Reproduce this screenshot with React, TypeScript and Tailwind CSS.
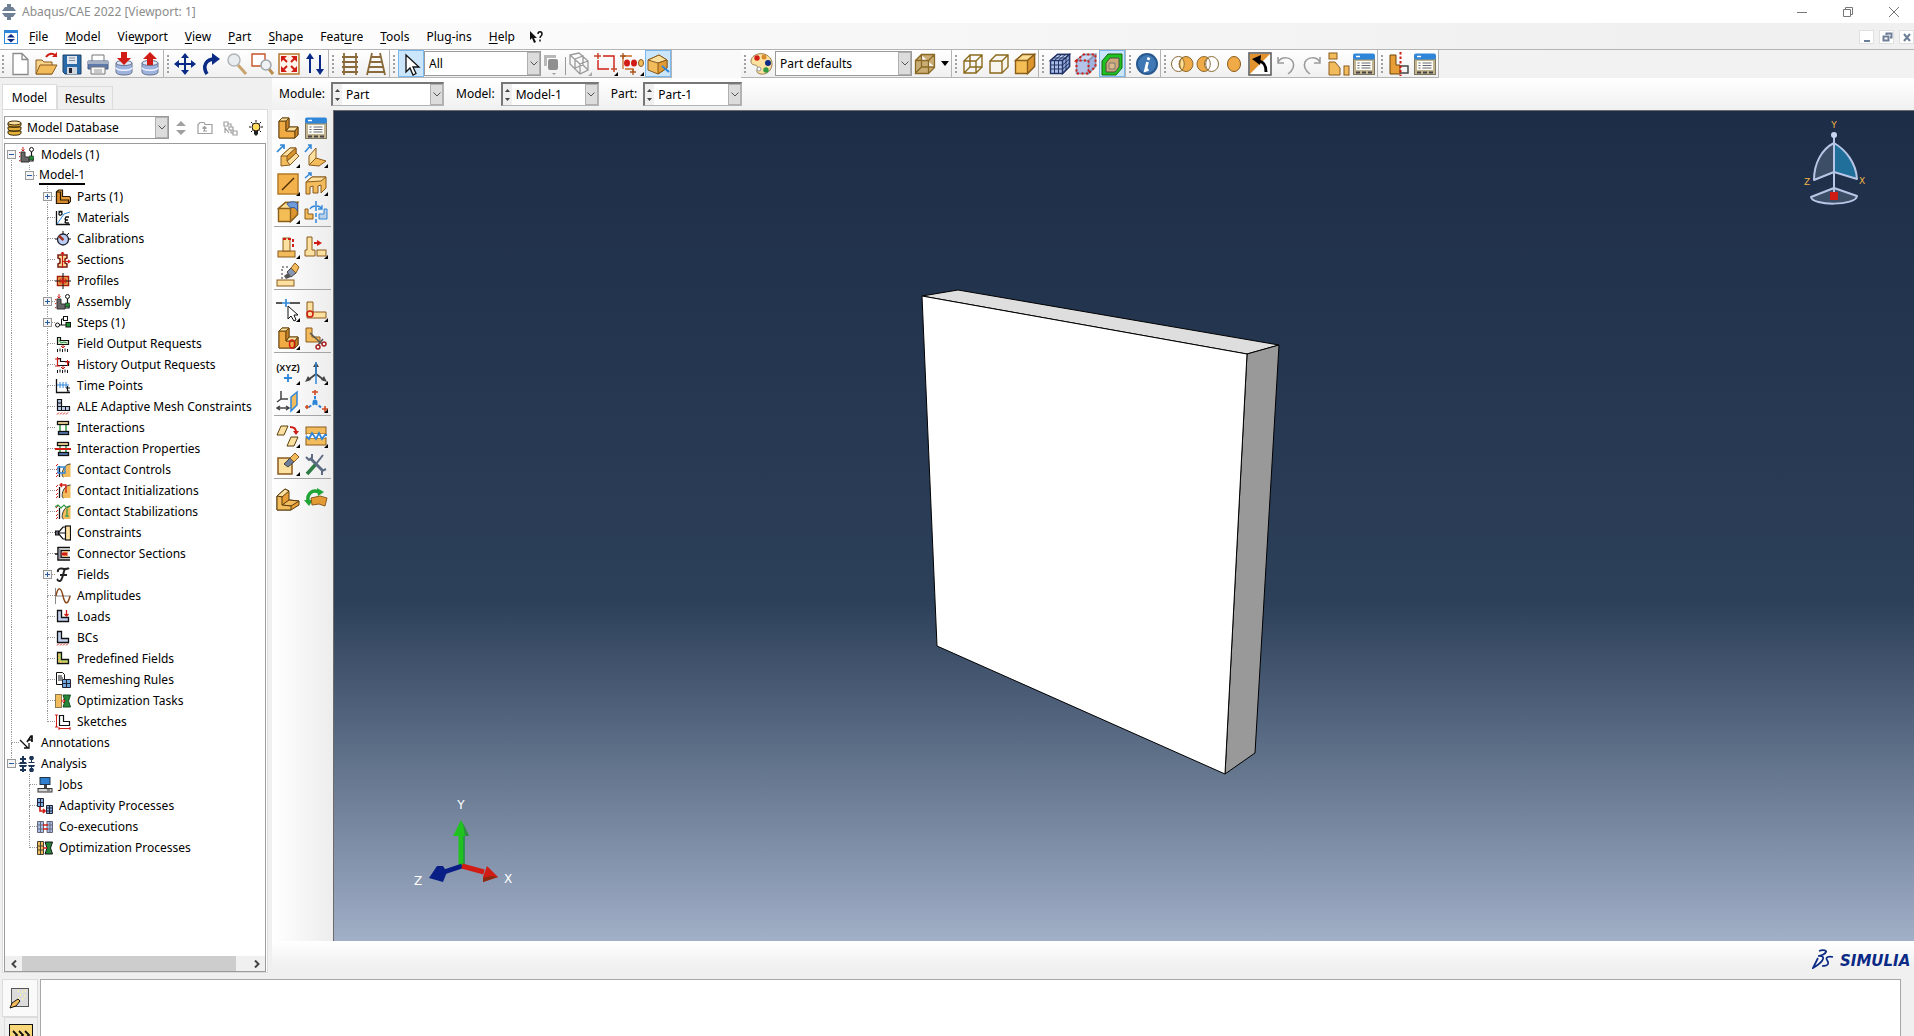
import type { ReactNode } from "react";

const G = "#f2bc5c";
const L = "#fbe0a0";
const D = "#8a5a1c";
const N = "#0b2a86";
const R = "#d01c14";
const B = "#2f86d8";

const cube = (front: string, top: string, side: string, stroke: string) => (
  <g fill={front} stroke={stroke} strokeWidth="1.4">
    <path d="M2.5 8.500l7-6h12v12l-7 7h-12z" />
    <path d="M2.500 8.500l7-6h12l-7 6z" fill={top} />
    <path d="M14.500 8.500l7-6v12l-7 7z" fill={side} />
  </g>
);

const dialog = (
  <g>
    <rect x="1.500" y="7" width="21" height="15.500" fill="#c3b490" stroke="#7c7460" />
    <rect x="1" y="1.500" width="22" height="6" rx="2" fill={B} />
    <path d="M4 4.500h4" stroke="#fff" strokeWidth="1.500" />
    <rect x="4" y="9" width="16" height="9" fill="#fdfdf6" />
    <path d="M5.500 11h2m2 0h9M5.500 13.500h2m2 0h9M5.500 16h2m2 0h9" stroke="#667" />
    <path d="M4 20.500h4m2 0h4m2 0h4" stroke="#444" strokeWidth="2" />
  </g>
);

const partL = (
  <g stroke="#6b4710" strokeWidth="1">
    <path d="M3 5l3-3h7v9h9v8l-3 3H3z" fill={G} />
    <path d="M3 5h7v10h9v7H3z" fill="#f0ab45" />
    <path d="M3 5l3-3h7l-3 3zM10 15l3-4h9l-3 4z" fill={L} />
    <path d="M10 5l3-3v9l-3 4zM19 15l3-4v8l-3 3z" fill="#c9832a" />
  </g>
);

const flyout = <path d="M24 20v4h-4z" fill="#000" stroke="none" />;

const database = (arrow: ReactNode) => (
  <g>
    <path d="M4 11v9c0 4 16 4 16 0v-9" fill="#9db2dd" stroke="#69748f" />
    <ellipse cx="12" cy="11" rx="8" ry="2.500" fill="#dfe8fa" stroke="#69748f" />
    <path d="M4 15.500c0 3.500 16 3.500 16 0" fill="none" stroke="#eef3ff" strokeWidth="1.500" />
    {arrow}
  </g>
);

const ICONS: Record<string, ReactNode> = {
  new: <path d="M5 1.500h9l6 6v15H5zM14 1.500v6h6" fill="#fff" stroke="#8b8b8b" strokeWidth="1.300" />,
  open: (
    <g>
      <path d="M2 22V8h6l2 2h8v12z" fill="#f7d48a" stroke={D} />
      <path d="M2 22l4-9h17l-5 9z" fill={G} stroke={D} />
      <path d="M12 5c3-4 6-4 9-2" fill="none" stroke={R} strokeWidth="2" />
      <path d="M18 5h5V0z" fill={R} />
    </g>
  ),
  save: (
    <g>
      <path d="M3 3h18v19H5l-2-2z" fill="#2a6aa8" stroke="#1c4468" />
      <rect x="7" y="4" width="10" height="8" fill="#dfe8ef" />
      <path d="M9 6h6M9 8.500h6" stroke="#889" />
      <rect x="7" y="15" width="10" height="7" fill="#cfd6dc" />
      <rect x="9" y="16" width="3" height="5" fill="#223" />
    </g>
  ),
  print: (
    <g>
      <path d="M6 9V3h12v6" fill="#fff" stroke="#777" />
      <path d="M2 9h20v8H2z" fill="#5b79ab" stroke="#4b5d80" />
      <path d="M2 9h20v3H2z" fill="#a5b0c4" />
      <path d="M5 15h14v7H5z" fill="#f7f7f7" stroke="#777" />
      <path d="M8 18h8M8 20h8" stroke="#999" />
    </g>
  ),
  dbIn: database(<path d="M9 0h6v6h4l-7 7-7-7h4z" fill={R} />),
  dbOut: database(<path d="M9 13h6V7h4l-7-7-7 7h4z" fill={R} />),
  pan: (
    <g stroke={N} strokeWidth="2" fill={N}>
      <path d="M12 3v18M3 12h18" />
      <path d="M12 1l4 5H8zM12 23l4-5H8zM1 12l5-4v8zM23 12l-5-4v8z" strokeWidth="0" />
    </g>
  ),
  rotate: (
    <g>
      <path d="M8 22C3 14 7 7 16 7" fill="none" stroke={N} strokeWidth="3.500" />
      <path d="M13 1l8 6-8 6z" fill={N} />
    </g>
  ),
  zoom: (
    <g>
      <path d="M13 13l8 9" stroke="#c9a36c" strokeWidth="3" />
      <circle cx="9" cy="8" r="6" fill="#e9edf0" stroke="#b0b6ba" strokeWidth="1.500" />
    </g>
  ),
  zoomBox: (
    <g>
      <path d="M1 2h13v12H1z" fill="#fff" stroke="#c5552a" strokeWidth="1.400" />
      <path d="M18 17l4 5" stroke="#b98d4c" strokeWidth="3" />
      <circle cx="15" cy="13" r="5" fill="#eef2f5" stroke="#a0a6aa" strokeWidth="1.500" />
    </g>
  ),
  fit: (
    <g>
      <rect x="2" y="2" width="20" height="20" fill="#fff3ea" stroke="#b57a35" strokeWidth="1.500" />
      <path d="M4 4h6L4 10zM20 4v6l-6-6zM4 20v-6l6 6zM20 20h-6l6-6z" fill={R} />
      <path d="M6 6l4 4M18 6l-4 4M6 18l4-4M18 18l-4-4" stroke={R} strokeWidth="2" />
    </g>
  ),
  cycle: (
    <g fill={N} stroke={N} strokeWidth="2">
      <path d="M7 21V5M17 3v16" />
      <path d="M7 1l4 6H3zM17 23l4-6h-8z" strokeWidth="0" />
    </g>
  ),
  ladder: (
    <path d="M6 1v22M18 1v22M4 5h16M4 10h16M4 15h16M4 20h16" stroke="#8a6a3a" strokeWidth="1.800" fill="none" />
  ),
  perspective: (
    <path d="M8 1L3 23M16 1l5 22M7 5h10M6 10h12M5 15h14M3 20h18" stroke="#8a6a3a" strokeWidth="1.800" fill="none" />
  ),
  pointer: <path d="M7 3v17l4-4 3 7 3-1.500-3-6.500h6z" fill="#fff" stroke="#111" strokeWidth="1.300" />,
  overlap: (
    <g>
      <rect x="2" y="3" width="12" height="11" fill="#b9b9b9" />
      <path d="M5 6h9v8H5z" fill="#fff" />
      <rect x="6" y="7" width="10" height="11" rx="2" fill="#8f8f8f" />
      <path d="M10 21h4l-2 2z" fill="#999" />
      <path d="M23.500 5v18" stroke="#999" />
    </g>
  ),
  wireGray: (
    <g fill="none" stroke="#9a9a9a" strokeWidth="1.300">
      <path d="M2 3l9-2 9 8v9l-8 4-10-10zM2 3l10 9v10M12 12l8-3M7 7l8-3v9M7 7v9M7 16l8-3 5 5" />
      <path d="M24 20v4h-4z" fill="#aaa" stroke="none" />
    </g>
  ),
  dragBox: (
    <g>
      <path d="M9 4h11v11M4 8v9h11" fill="none" stroke={R} strokeWidth="1.400" />
      <path d="M0 4h7M4 1v6M17 17h6M20 14v6" stroke="#c5452a" strokeWidth="1.500" />
      {flyout}
    </g>
  ),
  dragDots: (
    <g>
      <path d="M3 4h9M3 4v13M5 17h8v3" fill="none" stroke="#c96a28" strokeWidth="1.300" />
      <path d="M0 4h6M3 1v6M10 20h6M13 17v6" stroke="#a8541c" strokeWidth="1.300" />
      <ellipse cx="7" cy="11" rx="3" ry="3.500" fill={R} />
      <ellipse cx="14" cy="11" rx="3" ry="3.500" fill={R} />
      <ellipse cx="21" cy="11" rx="2.500" ry="3.500" fill={G} stroke={D} />
      {flyout}
    </g>
  ),
  boxFace: (
    <g>
      <path d="M2 8l11-5 8 5v8l-9 6-10-4z" fill={G} stroke={D} />
      <path d="M2 8l11-5 8 5-9 3z" fill={L} stroke={D} />
      <path d="M12 11v11l9-6V8z" fill="#e29a35" stroke={D} />
      <path d="M16 14l7 6" stroke={B} strokeWidth="2" />
    </g>
  ),
  palette: (
    <g>
      <path d="M8 2c8-2 15 4 14 11-1 8-9 11-14 8-3-2 1-5-1-7s-6 0-6-5c0-3 3-6 7-7z" fill={L} stroke="#9a8050" />
      <circle cx="7" cy="6" r="2.700" fill={R} />
      <circle cx="14" cy="5" r="2.500" fill="#d98b2b" />
      <circle cx="18" cy="11" r="3" fill={N} />
      <circle cx="16" cy="18" r="2.700" fill="#2f9a42" />
      <circle cx="9" cy="17" r="2" fill="#fff" stroke="#999" />
    </g>
  ),
  cubeTan: (
    <path d="M2.500 8.500h13v13h-13zM2.500 8.500l6-6h13v13l-6 6M15.500 8.500l6-6M8.500 3v12h13M8.500 15l-6 6" fill="#c9ad74" stroke="#8a6a25" strokeWidth="1.300" />
  ),
  cubeWire: (
    <path d="M3 9h12v12H3zM9 3h12v12H9zM3 9l6-6M15 9l6-6M15 21l6-6M3 21l6-6" fill="none" stroke="#8a6a1c" strokeWidth="1.400" />
  ),
  cubeHidden: <path d="M3 9h12v12H3zM3 9l6-6h12v12l-6 6M15 9l6-6" fill="#f8f5ee" stroke="#8a6a1c" strokeWidth="1.400" />,
  cubeShaded: cube("#f5bd55", "#fbdc93", "#dd9530", "#8a5f1c"),
  cubeMesh: (
    <g>
      {cube("#a9bce8", "#c3d1f2", "#93a8da", "#223465")}
      <path d="M6.500 8.500v13M10.500 8.500v13M2.500 13h12l7-6M2.500 17h12l7-6M6.500 8.500l7-6M10.500 8.500l7-6M18 5.500v13M5.500 6h12" fill="none" stroke="#223465" />
    </g>
  ),
  cubeSeeds: (
    <g>
      {cube("#b3c4e8", "#c9d6f2", "#9fb3de", "#8a8fa8")}
      <path d="M2.500 8.500v13h12v-13h-12l7-6h12v12l-7 7" fill="none" stroke={R} strokeWidth="2" strokeDasharray="2 2.500" />
    </g>
  ),
  cubeGreen: (
    <g>
      <path d="M2 9l6-7h14v14l-6 7H2z" fill="#1fc21f" stroke="#116611" />
      <path d="M6 11l4-5h9v9l-4 5H6z" fill="#cfa878" stroke="#4a4a4a" />
      <path d="M9 11h6v6H9z" fill="#dcb98a" stroke="#777" />
    </g>
  ),
  info: (
    <g>
      <circle cx="12" cy="12" r="10" fill="#3f78b5" stroke="#27598f" strokeWidth="2" />
      <path d="M14 5.500l-1 2.500M12.500 10l-2 8.500 3-1" stroke="#fff" strokeWidth="2.800" fill="none" />
    </g>
  ),
  setOr: (
    <g stroke="#8a6a30">
      <ellipse cx="8.500" cy="12" rx="7" ry="7.500" fill="#fff" />
      <ellipse cx="16" cy="12" rx="7" ry="7.500" fill="#f0ab48" />
      <path d="M12 6c3 3 3 9 0 12-3-3-3-9 0-12z" fill="#fbdc93" />
    </g>
  ),
  setMinus: (
    <g stroke="#8a6a30">
      <ellipse cx="8" cy="12" rx="7" ry="7.500" fill="#f0ab48" />
      <ellipse cx="15.500" cy="12" rx="7" ry="7.500" fill="#fff" />
      <path d="M12 6c3 3 3 9 0 12-3-3-3-9 0-12z" fill="#fff" />
    </g>
  ),
  setOne: <ellipse cx="12" cy="12" rx="6.500" ry="7.500" fill="#f0ab48" stroke={D} />,
  invert: (
    <g>
      <rect x="1" y="1" width="22" height="22" fill="#fff" stroke="#555" strokeWidth="1.500" />
      <path d="M2 2h20L2 22z" fill="#e2932e" />
      <path d="M18 20c0-7-2-10-7-11" fill="none" stroke="#000" strokeWidth="3" />
      <path d="M4 7l9-4-1 10z" fill="#000" />
    </g>
  ),
  undo: <path d="M4 5v6h6M4 10c4-6 12-5 15 0 2 5-1 9-5 12" fill="none" stroke="#9a9a9a" strokeWidth="1.500" />,
  redo: <path d="M20 5v6h-6M20 10c-4-6-12-5-15 0-2 5 1 9 5 12" fill="none" stroke="#9a9a9a" strokeWidth="1.500" />,
  pieces: (
    <g fill={G} stroke={D}>
      <rect x="3" y="1" width="8" height="6" />
      <path d="M3 10h6l5 6v7H3z" />
      <rect x="18" y="14" width="5" height="9" />
    </g>
  ),
  dialog,
  section: (
    <g>
      <path d="M3 3h6v10h4v9H3z" fill="#e89e36" stroke="#6b4710" />
      <path d="M13 14h8v7h-8" fill="none" stroke="#444" strokeWidth="1.500" />
      <path d="M13.500 0v24" stroke={R} strokeWidth="2" strokeDasharray="2.500 2" />
    </g>
  ),
  part: partL,
  extrude: (
    <g>
      <path d="M5 12l9-8h6v5l3 3-9 9-9 1z" fill={G} stroke={D} />
      <path d="M5 12l9-8h6l-9 8z" fill={L} stroke={D} />
      <path d="M11 17l9-8 3 3-9 9z" fill={L} stroke={D} />
      <path d="M11 12l9-8v5l-9 8z" fill="#d9952f" stroke={D} />
      <path d="M1 8l7-7M4 1h4v4" stroke={B} fill="none" strokeWidth="1.700" />
      {flyout}
    </g>
  ),
  shell: (
    <g>
      <path d="M5 12l7-8v10l-7 7z" fill={L} stroke={D} />
      <path d="M5 21l7-7 10 3-7 5z" fill={G} stroke={D} />
      <path d="M1 8l6-7M4 1h3v4" stroke={B} fill="none" strokeWidth="1.500" />
      {flyout}
    </g>
  ),
  wire: (
    <g>
      <rect x="2" y="2" width="20" height="20" fill="#f3b24c" stroke="#b57e2a" strokeWidth="1.500" />
      <path d="M6 18L18 6" stroke="#4a3008" strokeWidth="1.500" />
      {flyout}
    </g>
  ),
  cut: (
    <g>
      <path d="M2 10l6-5h14v11l-5 5v-8l-3 1v7H9v-7l-3 1v7H2z" fill={G} stroke={D} />
      <path d="M2 10l6-5h14l-5 4z" fill={L} stroke={D} />
      <path d="M1 6l6-5M4 1h3v3" stroke={B} fill="none" strokeWidth="1.500" />
      {flyout}
    </g>
  ),
  round: (
    <g>
      {cube("#f5bd55", "#fbdc93", "#dd9530", "#8a5f1c")}
      <path d="M11 4c3-3 9-3 10.500 0v7c-2-4-5-4-7-3z" fill="#6f9bd8" stroke="#3a5c98" />
      {flyout}
    </g>
  ),
  mirror: (
    <g>
      <path d="M1 9h3v5h5v5H1z" fill={G} stroke={D} />
      <path d="M23 9h-3v5h-5v5h8z" fill="#b9cfe8" stroke={B} />
      <path d="M12 1v22" stroke={B} strokeWidth="1.500" strokeDasharray="4 2" />
      <path d="M6 9c2-4 10-4 12 0M18 5v4h-4" fill="none" stroke={B} strokeWidth="1.300" />
    </g>
  ),
  editFeature: (
    <g>
      <rect x="2" y="16" width="17" height="6" fill={G} stroke={D} />
      <rect x="7" y="3" width="7" height="13" fill={L} stroke={D} />
      <path d="M7 4h10v10" stroke={R} strokeWidth="2" strokeDasharray="3 2" fill="none" />
      {flyout}
    </g>
  ),
  moveFeature: (
    <g>
      <path d="M3 2h5v13h3v6H1v-6h2z" fill={L} stroke={D} />
      <rect x="13" y="15" width="9" height="6" fill={L} stroke={D} />
      <path d="M10 8h5" stroke={R} strokeWidth="2" />
      <path d="M13 5l5 3-5 3z" fill={R} />
      {flyout}
    </g>
  ),
  eraseFeature: (
    <g>
      <rect x="1" y="17" width="17" height="6" fill={L} stroke={D} />
      <path d="M6 16V4h6" fill="none" stroke="#333" strokeDasharray="2 2" />
      <path d="M11 9l4-4 5 5-5 4z" fill="#8796b0" stroke="#444" />
      <path d="M15 5l4-5 4 4-3 6z" fill={G} stroke={D} />
      <path d="M8 13l4-3 3 4-5 2z" fill="#555" />
    </g>
  ),
  datumPick: (
    <g>
      <path d="M0 5h6M14 5h10" stroke="#222" strokeWidth="1.500" />
      <path d="M6 5h8M10 1v8" stroke={B} strokeWidth="1.700" />
      <path d="M12 8v13l3-3 3 5 2-1-2-5h4z" fill="#fff" stroke="#111" />
      {flyout}
    </g>
  ),
  partition: (
    <g>
      <path d="M3 4h6v10h13v6H3z" fill={L} stroke={D} />
      <circle cx="6" cy="16" r="3" fill="none" stroke={R} strokeWidth="1.500" />
      {flyout}
    </g>
  ),
  partitionCell: (
    <g>
      {partL}
      <ellipse cx="16" cy="18" rx="2.500" ry="4" fill="none" stroke={R} strokeWidth="1.500" />
      {flyout}
    </g>
  ),
  scissors: (
    <g>
      <path d="M2 2h6v9h8v5H2z" fill={G} stroke={D} />
      <path d="M6 7l12 11M14 19l5-6" stroke="#555" strokeWidth="1.500" />
      <circle cx="14" cy="21" r="2" fill="none" stroke="#a22" strokeWidth="1.500" />
      <circle cx="20" cy="18" r="2" fill="none" stroke="#a22" strokeWidth="1.500" />
    </g>
  ),
  xyz: (
    <g>
      <text x="12" y="10" textAnchor="middle" fontSize="9" fontWeight="700" fill="#111" className="[font-family:'Liberation_Sans',sans-serif]">
        (XYZ)
      </text>
      <path d="M8 17h8M12 13v8" stroke={B} strokeWidth="1.800" />
      {flyout}
    </g>
  ),
  axis: (
    <g>
      <path d="M12 13l-8 6M12 13l8 6M12 13V4" stroke="#444" strokeWidth="1.700" />
      <path d="M1 21l3-6 3 4zM23 21l-3-6-3 4z" fill="#444" />
      <path d="M9 6l3-5 3 5z" fill="#444" />
      <path d="M12 1v22" stroke={B} strokeWidth="1.500" />
      {flyout}
    </g>
  ),
  plane: (
    <g>
      <path d="M15 8l6-5v13l-6 6z" fill={G} stroke={B} strokeWidth="1.500" />
      <path d="M5 2v8h7M5 10l-4 3M2 19h10M4 17l-3 2 3 2M10 17l3 2-3 2" stroke="#444" fill="none" strokeWidth="1.500" />
      {flyout}
    </g>
  ),
  csys: (
    <g>
      <path d="M11 1v5M8 3h6M3 16v4M1 18h5M18 20h6M21 17v6" stroke="#d04a20" strokeWidth="1.600" />
      <path d="M11 7v4M11 14l-6 4M11 14l7 5" stroke={B} strokeWidth="2" strokeDasharray="3 1.500" />
      <circle cx="11" cy="13" r="2.500" fill={B} />
      {flyout}
    </g>
  ),
  offset: (
    <g>
      <path d="M1 11l4-9h7l-4 9zM11 22l4-9h7l-4 9z" fill={L} stroke="#5a4010" />
      <path d="M14 3c4 0 6 2 6 5" fill="none" stroke={R} strokeWidth="2" />
      <path d="M17 7h6l-3 4z" fill={R} />
      {flyout}
    </g>
  ),
  stitch: (
    <g>
      <rect x="2" y="3" width="20" height="7" fill={G} stroke={D} />
      <rect x="2" y="14" width="20" height="7" fill={G} stroke={D} />
      <path d="M3 10h18v4H3z" fill="#fff" />
      <path d="M2 12l3 3 3-6 4 6 3-6 3 6 3-4h2" fill="none" stroke={B} strokeWidth="1.800" />
      {flyout}
    </g>
  ),
  repair: (
    <g>
      <rect x="2" y="6" width="14" height="16" fill={L} stroke={D} strokeWidth="1.500" />
      <path d="M8 12l6-6 4 4-6 5z" fill="#6f7f9a" stroke="#444" />
      <path d="M14 6l5-5 4 4-5 5z" fill={G} stroke={D} />
      {flyout}
    </g>
  ),
  tools: (
    <g>
      <path d="M3 22l9-10" stroke="#2e7a45" strokeWidth="3.500" />
      <path d="M12 12l7-9" stroke="#5d6b82" strokeWidth="2" />
      <path d="M6 6l13 13" stroke="#5d6b82" strokeWidth="3" />
      <path d="M2 5l3 3 3-2V2M18 23v-4l4-2" fill="none" stroke="#5d6b82" strokeWidth="2" />
    </g>
  ),
  solidL: (
    <g stroke="#5a3c0c">
      <path d="M1 9l8-7 4 2v9l10 1v4l-8 5H1z" fill="#e89e36" />
      <path d="M1 9l8-7 4 2-7 6z" fill={L} />
      <path d="M6 18l7-5 10 1-8 5z" fill={G} />
      <path d="M1 9l5 1v8l9 1v4H1z" fill={G} />
    </g>
  ),
  recycle: (
    <g>
      <path d="M15 5C8 2 3 7 4 14" fill="none" stroke="#1fa436" strokeWidth="3.500" />
      <path d="M0 13h9l-4 6zM13 1l7 4-6 4z" fill="#1fa436" />
      <path d="M7 11l9-2 7 2-2 8-6-2-7 1z" fill="#e29a35" stroke={D} />
    </g>
  ),
};

/* 16px tree glyphs */
const hatch = <path d="M2 15.500l2-2M5 15.500l2-2M8 15.500l2-2M11 15.500l2-2" stroke={R} />;
const ell = (fill: string) => <path d="M2.500 1.500h4v7h7v4h-11z" fill={fill} stroke="#111" strokeWidth="1.300" />;
const bolt = (mid: ReactNode) => (
  <g>
    <path d="M5 4v8M11 4v8" stroke="#2f9a42" strokeWidth="1.500" />
    <rect x="2.500" y="1.500" width="11" height="3" fill={L} stroke="#111" strokeWidth="1.300" />
    <rect x="3.500" y="11.500" width="10" height="3" fill="#5a7ab8" stroke="#111" strokeWidth="1.300" />
    {mid}
  </g>
);
const contact = (over: ReactNode) => (
  <g>
    <path d="M1 4l2-2M1 8l2-2M1 12l2-2M1 15l2-2" stroke={R} />
    <path d="M4.500 4v11" stroke="#111" strokeWidth="1.300" />
    <path d="M15.500 2c-8 0-10 13-7 13h7z" fill={G} />
    <path d="M15.500 2c-8 0-10 13-7 13" stroke="#333" />
    {over}
  </g>
);

const GLYPHS: Record<string, ReactNode> = {
  models: (
    <g>
      <path d="M2 5h4v5h4v5H2z" fill="#666" stroke="#333" />
      <path d="M4 0v4M2.500 2.500L4 4l1.500-1.500" stroke={R} fill="none" />
      <path d="M0 6l1.500-1M0 10l1.500-1M0 14l1.500-1" stroke={R} />
      <circle cx="12.500" cy="2.500" r="2" fill="#fff" stroke="#111" />
      <path d="M12.500 5v5M10 14h4v-3" stroke="#111" strokeWidth="1.200" />
      <rect x="10.500" y="9" width="4" height="4" fill="#1f8f35" stroke="#111" strokeWidth="0.500" />
    </g>
  ),
  parts: (
    <g stroke="#2a1a04" strokeWidth="1.200">
      <path d="M1.500 3l2-2h4v6.500h7l1 1v4l-2 2h-12z" fill="#e89e36" />
      <path d="M1.500 3h4v8h8v3.500h-12z" fill="#d98a28" />
    </g>
  ),
  materials: (
    <g fill="none" stroke="#111">
      <path d="M1.500 1v13.500H15" strokeWidth="1.300" />
      <path d="M2 14L9 4l6-2" stroke={B} />
      <path d="M3.500 1.500h4M5 2c-2 1-1 4 1 3s1-2 0-3M14 7h-3l-1 2 1 1-1 2 1 1h3M10 10h3" strokeWidth="1.300" />
    </g>
  ),
  calibrations: (
    <g>
      <circle cx="8" cy="8.500" r="5.500" fill="#b9cdf2" stroke="#223" strokeWidth="1.300" />
      <path d="M8.500 9L4 5" stroke="#a3301c" strokeWidth="2.500" />
      <path d="M8 0v3M0 8h3M13 8h3M12 4l2-2" stroke="#111" />
    </g>
  ),
  sections: (
    <g>
      <path d="M3 3h9v3l-2 1v4l2 1v3H3v-3l2-1V7L3 6z" fill={L} stroke="#7a1c10" strokeWidth="1.500" />
      <path d="M7.500 0v16M7.500 9.500h7M13 8l2 1.500-2 1.500M6 2l1.500-2L9 2" stroke={R} strokeWidth="1.200" fill="none" />
    </g>
  ),
  profiles: (
    <g>
      <rect x="2.500" y="3.500" width="11" height="9" fill={G} stroke="#a3200f" strokeWidth="1.500" />
      <rect x="5" y="6" width="6" height="4" stroke={R} />
      <path d="M8 0v16M0 8h16" stroke="#111" />
      <path d="M5 8h6M8 5v6" stroke={R} strokeWidth="1.500" />
    </g>
  ),
  steps: (
    <g>
      <circle cx="2.500" cy="10" r="2" fill="#fff" stroke="#111" />
      <path d="M4.500 10H11M6.500 10V4H9" stroke="#111" fill="none" />
      <rect x="8.500" y="1.500" width="4" height="4" fill="#fff" stroke="#111" />
      <rect x="11" y="7.500" width="4.500" height="4.500" fill="#1f8f35" stroke="#111" />
    </g>
  ),
  fieldOut: (
    <g>
      <path d="M2.500 1.500h3v3h8v4h-11z" fill="#d5ead0" stroke="#111" strokeWidth="1.200" />
      <path d="M4 4l2 3 3-1 3 1" stroke="#2f9a42" />
      <path d="M8 9v3M6 10l2 2 2-2" stroke={R} />
      <path d="M2.500 13v3M5 12.500v3M7.500 13v3M10 12.500v3M12.500 13v3" stroke="#111" />
    </g>
  ),
  historyOut: (
    <g>
      <path d="M2.500 1.500h3v3h8v4h-11z" fill="#fff" stroke="#111" strokeWidth="1.200" />
      <path d="M0 2h5M2.500 0v9M10 5h5M12.500 3v6M8 9v3M0 9h5M6 10l2 2 2-2" stroke={R} />
      <path d="M2.500 13v3M5 12.500v3M7.500 13v3M10 12.500v3M12.500 13v3" stroke="#111" />
    </g>
  ),
  timePoints: (
    <g fill="none" stroke="#111">
      <path d="M1.500 1v13.500H15" strokeWidth="1.300" />
      <path d="M2 7h12M5 4v6M8 4v6M11 4v6" stroke={B} />
      <path d="M12.500 8v5h2M11 10h4" strokeWidth="1.200" />
    </g>
  ),
  ale: (
    <g>
      <path d="M2.500 0.500h4v7h8v4h-12z" fill="#b9c9e8" stroke="#111" strokeWidth="1.200" />
      <path d="M2.500 4h4M6.500 7.500v4M10.500 7.500v4M2.500 7.500h4" stroke="#111" />
      {hatch}
    </g>
  ),
  interactions: bolt(null),
  interactionProps: bolt(<path d="M0 8h16" stroke={R} strokeWidth="2" />),
  contactControls: contact(<path d="M3 5h7v6H3z" fill="none" stroke={B} strokeWidth="1.300" />),
  contactInit: contact(<path d="M5 2h6v8M7 0L5 2l2 2" fill="none" stroke={R} strokeWidth="1.300" />),
  contactStab: contact(
    <path d="M0 3l3-2 3 3 3-3 3 3 3-2M12 5v8M10 12h4" fill="none" stroke="#2f9a42" strokeWidth="1.200" />
  ),
  constraints: (
    <g stroke="#111">
      <path d="M3 8l5-6h3M3 8l5 6h3M3 8h7" strokeWidth="1.200" />
      <rect x="10.500" y="1" width="5" height="14" fill={L} strokeWidth="1.200" />
      <rect x="0.500" y="6" width="3" height="4" fill="#667" />
    </g>
  ),
  connectors: (
    <g fill="none" stroke="#111" strokeWidth="1.500">
      <path d="M15 1.500H3v12.500h12M15 4.500H6v7h9" />
      <path d="M4.500 3v10" stroke="#99a" />
      <path d="M0 8h3" />
      <path d="M13 6H9v4h4" stroke={G} />
      <rect x="7" y="7" width="5" height="2" fill={R} stroke={R} strokeWidth="1" />
    </g>
  ),
  fields: (
    <path d="M3 5c-1-4 4-4 6-3 2 0 4 0 5-1M10 2c-2 3-2 11-5 12-2 0-3-1-2-2M5 8h7" fill="none" stroke="#222" strokeWidth="2" />
  ),
  amplitudes: (
    <g fill="none">
      <path d="M0.500 0v16M0 8h16" stroke="#888" />
      <path d="M1 8C3-2 6-1 8 8s5 9 7 0" stroke="#8a4a1c" strokeWidth="1.500" />
    </g>
  ),
  loads: (
    <g>
      {ell("#c3d1ee")}
      <path d="M11.500 1v6M9.500 5l2 2 2-2" stroke={R} fill="none" strokeWidth="1.300" />
    </g>
  ),
  bcs: (
    <g>
      {ell("#c3d1ee")}
      {hatch}
    </g>
  ),
  predefined: (
    <g>
      {ell("#b5d86a")}
      <path d="M4 3v8h8" stroke={G} strokeWidth="1.500" strokeDasharray="2 1" fill="none" />
    </g>
  ),
  remesh: (
    <g>
      <path d="M1.500 0.500h6l2 2v10h-8z" fill="#fff" stroke="#111" />
      <path d="M3 4h4M3 6h5M3 8h4" stroke="#111" />
      <path d="M7.500 7.500h8v8h-8zM7.500 11.500h8M11.500 7.500v8" fill="#6fa8e0" stroke="#223" />
    </g>
  ),
  optimize: (
    <g>
      <rect x="0.500" y="1.500" width="6" height="13" fill={G} stroke="#8a7a50" />
      <path d="M8 2h7.500l-2 6 2 6H8l2-6z" fill="#25863a" stroke="#174d22" />
      <path d="M6 8h4M8 6l2 2-2 2" stroke={R} fill="none" />
    </g>
  ),
  sketches: (
    <g>
      <path d="M4.500 1.500h4v6h6v4h-10z" fill="#fff" stroke="#111" strokeWidth="1.200" />
      <path d="M1.500 1v12M0 1h3M0 13h3M4 14.500h11M4 13v3M15 13v3" stroke={R} />
    </g>
  ),
  annotations: (
    <g stroke="#111" fill="none">
      <path d="M1 5l8 8M5 13h5V8" strokeWidth="1.300" />
      <path d="M8 7l4-6h1v6M10 5h3" strokeWidth="1.700" />
    </g>
  ),
  analysis: (
    <g fill="#1d3557">
      <path d="M3 0h2v2h2v2H5v2h2l1 2H0l1-2h2V4H1V2h2zM0 9h8l-1 2H5v2h2v2H5v1H3v-1H1v-2h2v-2H1z" />
      <path d="M11 0h3l1 2-1 2h-1v2h2l1 1H9l1-1h2V4h-1l-1-2zM9 9h7l-1 2h-2v1h1l1 2-1 2h-3l-1-2 1-2h1v-1h-2z" />
    </g>
  ),
  jobs: (
    <g>
      <rect x="3" y="0.500" width="10" height="7" fill="#2f7fd0" stroke="#234" />
      <path d="M7 8h3v3H7z" fill="#444" />
      <rect x="1" y="11.500" width="14" height="3.500" fill="#d5d5d5" stroke="#333" />
      <path d="M10 13h3" stroke="#333" />
    </g>
  ),
  adaptivity: (
    <g>
      <path d="M0.500 0.500h6v8h-6zM0.500 4.500h6M3.500 0.500v8" fill="#7fb0e8" stroke="#223" />
      <path d="M9.500 7.500h6v8h-6zM9.500 10h6M9.500 13h6M12.500 7.500v8" fill="#7fb0e8" stroke="#223" />
      <path d="M3 9v4h5M6 11l2 2-2 2" stroke={R} fill="none" strokeWidth="1.700" />
    </g>
  ),
  coexec: (
    <g>
      <path d="M0.500 2.500h6v11h-6zM0.500 6h6M0.500 10h6M3.500 2.500v11M10 2.500h5.500v11H10zM10 6h5.500M10 10h5.500M13 2.500v11" fill="#a9c0ea" stroke="#667" />
      <path d="M6 6h5M6 10h5" stroke={R} strokeWidth="1.500" />
    </g>
  ),
  optProc: (
    <g>
      <path d="M0.500 1.500h6v13h-6zM0.500 6h6M0.500 10h6M3.500 1.500v13" fill={G} stroke="#443" />
      <path d="M8 2h7.500l-2 6 2 6H8l2-6z" fill="#25863a" stroke="#111" />
      <path d="M6 8h4" stroke={R} strokeWidth="1.500" />
    </g>
  ),
};

const Icon = ({ name }: { name: string }) => (
  <svg viewBox="0 0 24 24" className="size-6" fill="none" aria-hidden="true">
    {ICONS[name]}
  </svg>
);

const ToolButton = ({ name, active }: { name: string; active?: boolean }) => (
  <button
    aria-label={name}
    className={`flex h-full w-[26px] items-center justify-center ${
      active ? "border border-[#7ab8f0] bg-[#cbe6fb]" : ""
    }`}
  >
    <Icon name={name} />
  </button>
);

const Grip = () => (
  <div className="flex w-2 items-center justify-center">
    <div className="h-[18px] border-l-2 border-dotted border-[#a0a0a0]" />
  </div>
);

const Group = ({ children }: { children: ReactNode }) => (
  <div className="flex border-r border-[#b4b4b4] bg-linear-to-b from-white to-[#f0f0f0]">
    <Grip />
    {children}
  </div>
);

const Caret = () => (
  <span className="pointer-events-none absolute inset-y-0 right-0 flex w-[13px] items-center justify-center border border-[#b0b0b0] bg-[#dcdcdc]">
    <svg viewBox="0 0 8 5" className="w-2" fill="none" stroke="#555" aria-hidden="true">
      <path d="M0.500 0.500L4 4l3.500-3.500" />
    </svg>
  </span>
);

const Combo = ({ label, value, className }: { label: string; value: string; className: string }) => (
  <div className={`relative border border-[#9b9b9b] bg-white ${className}`}>
    <select aria-label={label} className="h-full w-full appearance-none bg-transparent pr-4 pl-1 outline-none">
      <option>{value}</option>
    </select>
    <Caret />
  </div>
);

const ContextCombo = ({ id, label, value, className }: { id: string; label: string; value: string; className: string }) => (
  <div className="flex items-center gap-1.5">
    <label htmlFor={id}>{label}</label>
    <div className={`relative flex h-6 border-t-2 border-r border-b border-l-2 border-[#777] border-r-[#b4b4b4] border-b-[#b4b4b4] bg-white ${className}`}>
      <div className="flex w-[9px] flex-col items-center justify-center gap-1.5 bg-[#f0f0f0]">
        <svg viewBox="0 0 5 3" className="w-[5px]" fill="#444" aria-hidden="true">
          <path d="M0 3L2.500 0 5 3z" />
        </svg>
        <svg viewBox="0 0 5 3" className="w-[5px]" fill="#444" aria-hidden="true">
          <path d="M0 0h5L2.500 3z" />
        </svg>
      </div>
      <select id={id} className="min-w-0 flex-1 appearance-none bg-transparent pr-3 pl-1 outline-none">
        <option>{value}</option>
      </select>
      <Caret />
    </div>
  </div>
);

const MENUS: [string, string, string][] = [
  ["", "F", "ile"],
  ["", "M", "odel"],
  ["Vie", "w", "port"],
  ["", "V", "iew"],
  ["", "P", "art"],
  ["", "S", "hape"],
  ["Feat", "u", "re"],
  ["", "T", "ools"],
  ["Plu", "g", "-ins"],
  ["", "H", "elp"],
];

const TitleBar = () => (
  <header className="flex h-[23px] items-center bg-white pl-0.5 text-[#8c8c8c]">
    <svg viewBox="0 0 14 16" className="mr-1.5 h-4 w-3.5" aria-hidden="true">
      <path d="M5 0h4v3h2l3 4H0l3-4h2zM0 9h14l-3 4H9v3H5v-3H3z" fill="#6f8094" />
    </svg>
    <h1 className="flex-1">Abaqus/CAE 2022 [Viewport: 1]</h1>
    <div className="flex gap-1.5">
      <button aria-label="Minimize" className="flex w-10 justify-center">
        <svg viewBox="0 0 12 12" className="size-3" fill="none" stroke="#777"><path d="M1 6.500h10" /></svg>
      </button>
      <button aria-label="Restore" className="flex w-10 justify-center">
        <svg viewBox="0 0 12 12" className="size-3" fill="none" stroke="#777"><path d="M1.500 3.500h7v7h-7zM3.500 3V1.500h7v7H9" /></svg>
      </button>
      <button aria-label="Close" className="flex w-10 justify-center">
        <svg viewBox="0 0 12 12" className="size-3" fill="none" stroke="#777"><path d="M1 1l10 10M11 1L1 11" /></svg>
      </button>
    </div>
  </header>
);

const MenuBar = () => (
  <nav className="flex h-[27px] items-center border-b border-[#b4b4b4] bg-linear-to-r from-white to-[#f0f0f0] to-85% pt-0.5 pl-1">
    <svg viewBox="0 0 14 14" className="mr-[11px] size-3.5" aria-hidden="true">
      <rect x="0.500" y="0.500" width="13" height="13" fill="#fff" stroke={B} />
      <path d="M0 0h14v3H0z" fill={B} />
      <path d="M7 4l4 3.500H3zM3 9h8l-4 3.500z" fill={N} />
    </svg>
    <div className="flex gap-[17px]">
      {MENUS.map(([before, key, after]) => (
        <button key={before + key + after}>
          {before}
          <span className="underline underline-offset-2">{key}</span>
          {after}
        </button>
      ))}
    </div>
    <button aria-label="Context help" className="ml-3.5">
      <svg viewBox="0 0 14 14" className="size-3.5" aria-hidden="true">
        <path d="M1 1v9l2-2 2 5 2-1-2-4h3z" fill="#111" />
        <path d="M9 4c0-3 4-3 4 0 0 2-2 2-2 4M11 9.500v2" fill="none" stroke="#111" strokeWidth="1.500" />
      </svg>
    </button>
    <div className="ml-auto flex gap-[5px]">
      {["M3 10h6", "M5.500 4V2.500h5v4H9M2.500 5.500h5v4h-5z", "M3 3l6 7M9 3l-6 7"].map((d) => (
        <button key={d} aria-label="Viewport window" className="flex h-3.5 w-[15px] items-center justify-center border border-[#e0e0e0] bg-white">
          <svg viewBox="0 0 12 12" className="size-3" fill="none" stroke="#6c7f96" strokeWidth="2">
            <path d={d} />
          </svg>
        </button>
      ))}
    </div>
  </nav>
);

const Toolbar = () => (
  <div className="-ml-px flex h-7 shrink-0 bg-[#f2f2f2]">
    <div className="flex border-b border-[#b4b4b4]">
      <Group>
        {["new", "open", "save", "print", "dbIn", "dbOut"].map((n) => (
          <ToolButton key={n} name={n} />
        ))}
      </Group>
      <Group>
        {["pan", "rotate", "zoom", "zoomBox", "fit", "cycle"].map((n) => (
          <ToolButton key={n} name={n} />
        ))}
      </Group>
      <Group>
        <ToolButton name="ladder" />
        <ToolButton name="perspective" />
      </Group>
      <Group>
        <ToolButton name="pointer" active />
        <Combo label="Selection filter" value="All" className="my-px w-[117px]" />
        {["overlap", "wireGray", "dragBox", "dragDots"].map((n) => (
          <ToolButton key={n} name={n} />
        ))}
        <ToolButton name="boxFace" active />
      </Group>
    </div>
    <div className="w-[69px] bg-[#f9f9f9]" />
    <div className="flex border-b border-[#b4b4b4]">
      <Group>
        <ToolButton name="palette" />
        <Combo label="Color mapping" value="Part defaults" className="my-px w-[137px]" />
        <ToolButton name="cubeTan" />
        <button aria-label="Display options" className="flex w-[13px] items-center justify-center">
          <svg viewBox="0 0 8 5" className="w-2"><path d="M0 0h8L4 5z" /></svg>
        </button>
      </Group>
      <Group>
        {["cubeWire", "cubeHidden", "cubeShaded"].map((n) => (
          <ToolButton key={n} name={n} />
        ))}
      </Group>
      <Group>
        <ToolButton name="cubeMesh" />
        <ToolButton name="cubeSeeds" />
        <ToolButton name="cubeGreen" active />
      </Group>
      <Group>
        <ToolButton name="info" />
      </Group>
      <Group>
        {["setOr", "setMinus", "setOne", "invert", "undo", "redo", "pieces", "dialog"].map((n) => (
          <ToolButton key={n} name={n} />
        ))}
      </Group>
      <Group>
        <ToolButton name="section" />
        <ToolButton name="dialog" />
      </Group>
    </div>
  </div>
);

interface TreeItem {
  label: string;
  depth: number;
  glyph?: string;
  toggle?: "+" | "-";
  lastChild?: boolean;
}

const TREE: TreeItem[] = [
  { label: "Models (1)", depth: 0, glyph: "models", toggle: "-" },
  { label: "Model-1", depth: 1, toggle: "-", lastChild: true },
  { label: "Parts (1)", depth: 2, glyph: "parts", toggle: "+" },
  { label: "Materials", depth: 2, glyph: "materials" },
  { label: "Calibrations", depth: 2, glyph: "calibrations" },
  { label: "Sections", depth: 2, glyph: "sections" },
  { label: "Profiles", depth: 2, glyph: "profiles" },
  { label: "Assembly", depth: 2, glyph: "models", toggle: "+" },
  { label: "Steps (1)", depth: 2, glyph: "steps", toggle: "+" },
  { label: "Field Output Requests", depth: 2, glyph: "fieldOut" },
  { label: "History Output Requests", depth: 2, glyph: "historyOut" },
  { label: "Time Points", depth: 2, glyph: "timePoints" },
  { label: "ALE Adaptive Mesh Constraints", depth: 2, glyph: "ale" },
  { label: "Interactions", depth: 2, glyph: "interactions" },
  { label: "Interaction Properties", depth: 2, glyph: "interactionProps" },
  { label: "Contact Controls", depth: 2, glyph: "contactControls" },
  { label: "Contact Initializations", depth: 2, glyph: "contactInit" },
  { label: "Contact Stabilizations", depth: 2, glyph: "contactStab" },
  { label: "Constraints", depth: 2, glyph: "constraints" },
  { label: "Connector Sections", depth: 2, glyph: "connectors" },
  { label: "Fields", depth: 2, glyph: "fields", toggle: "+" },
  { label: "Amplitudes", depth: 2, glyph: "amplitudes" },
  { label: "Loads", depth: 2, glyph: "loads" },
  { label: "BCs", depth: 2, glyph: "bcs" },
  { label: "Predefined Fields", depth: 2, glyph: "predefined" },
  { label: "Remeshing Rules", depth: 2, glyph: "remesh" },
  { label: "Optimization Tasks", depth: 2, glyph: "optimize" },
  { label: "Sketches", depth: 2, glyph: "sketches", lastChild: true },
  { label: "Annotations", depth: 0, glyph: "annotations" },
  { label: "Analysis", depth: 0, glyph: "analysis", toggle: "-", lastChild: true },
  { label: "Jobs", depth: 1, glyph: "jobs" },
  { label: "Adaptivity Processes", depth: 1, glyph: "adaptivity" },
  { label: "Co-executions", depth: 1, glyph: "coexec" },
  { label: "Optimization Processes", depth: 1, glyph: "optProc", lastChild: true },
];

// the root guide runs from Models down to Analysis
const ROOT_END = TREE.findIndex((t) => t.label === "Analysis");

const TreeRow = ({ item, index }: { item: TreeItem; index: number }) => (
  <li className="flex h-[21px] items-center">
    {item.depth > 0 && (
      <div className="h-full w-[18px] pl-1.5">
        {index < ROOT_END && <div className="h-full border-l border-dotted border-[#999]" />}
      </div>
    )}
    {item.depth > 1 && <div className="w-[18px]" />}
    <div className="relative h-full w-3.5 pl-1.5">
      <div className={`h-[11px] border-dotted border-[#999] ${index > 0 ? "border-b border-l" : ""}`} />
      {!item.lastChild && <div className="h-2.5 border-l border-dotted border-[#999]" />}
      {item.toggle && (
        <button
          aria-label={item.toggle === "+" ? "Expand" : "Collapse"}
          className="absolute top-1.5 left-0.5 flex size-[9px] items-center justify-center border border-[#999] bg-[#f4f4f4]"
        >
          <svg viewBox="0 0 7 7" className="size-[7px] shrink-0" stroke="#2a5aa0">
            <path d={item.toggle === "+" ? "M1 3.500h5M3.500 1v5" : "M1 3.500h5"} />
          </svg>
        </button>
      )}
    </div>
    {item.glyph && (
      <svg viewBox="0 0 16 16" className="size-4 shrink-0" fill="none" aria-hidden="true">
        {GLYPHS[item.glyph]}
      </svg>
    )}
    <span className={item.glyph ? "ml-1.5" : "ml-0.5 border-b-2 border-black leading-4"}>{item.label}</span>
  </li>
);

const ModelPanel = () => (
  <aside className="flex w-[268px] shrink-0 flex-col bg-[#f0f0f0] pt-1.5 pb-1.5 pl-0.5">
    <div role="tablist" className="flex items-end">
      <button role="tab" aria-selected="true" className="h-[25px] w-[55px] border border-b-0 border-[#dcdcdc] bg-white pt-0.5">
        Model
      </button>
      <button role="tab" aria-selected="false" className="h-[23px] w-14 border border-b-0 border-[#dcdcdc] pt-0.5">
        Results
      </button>
    </div>
    <div className="flex min-h-0 flex-1 flex-col border border-[#dcdcdc] bg-white px-px">
      <div className="flex h-[33px] items-center pt-0.5">
        <div className="relative flex h-[23px] w-[165px] items-center border border-[#9b9b9b] pl-0.5">
          <svg viewBox="0 0 16 16" className="size-4 shrink-0" aria-hidden="true">
            <g fill="#e5b13a" stroke="#3a2a08">
              <path d="M1 11v2c0 3 13 3 13 0v-2zM1 7v2c0 3 13 3 13 0V7zM1 3v2c0 3 13 3 13 0V3z" />
              <ellipse cx="7.500" cy="3" rx="6.500" ry="2" fill={L} />
            </g>
          </svg>
          <select aria-label="Tree source" className="min-w-0 flex-1 appearance-none bg-transparent pl-1 outline-none">
            <option>Model Database</option>
          </select>
          <Caret />
        </div>
        <div className="flex flex-1 items-center justify-between pr-0.5 pl-1.5">
          <button aria-label="Sort">
            <svg viewBox="0 0 12 16" className="h-4 w-3" fill="#a0a0a0"><path d="M1 6l5-5 5 5zM1 10h10l-5 5z" /></svg>
          </button>
          <button aria-label="Up one level">
            <svg viewBox="0 0 16 14" className="h-3.5 w-4" fill="none" stroke="#a0a0a0" strokeWidth="1.200">
              <path d="M1 12.500V3.500l2-2h4l1 2h7v9zM6 10h4M7.500 10V6M5.500 7.500l2-2 2 2" />
            </svg>
          </button>
          <button aria-label="Link">
            <svg viewBox="0 0 16 16" className="size-4" fill="none" stroke="#a0a0a0" strokeWidth="1.200">
              <path d="M2 2h4v4H2zM7 7h4v3H7zM11 11h4v4h-4zM6 4h3v3M3 13V8l4 5M9 10v3h2" />
            </svg>
          </button>
          <button aria-label="Tips">
            <svg viewBox="0 0 16 16" className="size-4" fill="none">
              <circle cx="8" cy="7" r="4" fill="#ffd95a" stroke="#111" />
              <path d="M6 11h4v3l-2 2-2-2z" fill="#222" />
              <path d="M8 0v2M1 7h2M13 7h2M3 2l1.500 1.500M13 2l-1.500 1.500M3 12l1.500-1.500M13 12l-1.500-1.500" stroke="#111" />
            </svg>
          </button>
        </div>
      </div>
      <div className="flex min-h-0 flex-1 flex-col border border-[#9b9b9b] bg-white">
        <ul className="min-h-0 flex-1 overflow-hidden whitespace-nowrap">
          {TREE.map((item, i) => (
            <TreeRow key={item.label} item={item} index={i} />
          ))}
        </ul>
        <div className="flex h-[15px] bg-[#f0f0f0]">
          <button aria-label="Scroll left" className="flex w-[17px] items-center justify-center">
            <svg viewBox="0 0 8 8" className="size-2" fill="none" stroke="#444" strokeWidth="2"><path d="M6 0.500L2.500 4 6 7.500" /></svg>
          </button>
          <div className="flex-1 pr-3">
            <div className="h-full bg-[#cdcdcd]" />
          </div>
          <button aria-label="Scroll right" className="flex w-[17px] items-center justify-center">
            <svg viewBox="0 0 8 8" className="size-2" fill="none" stroke="#444" strokeWidth="2"><path d="M2 0.500L5.500 4 2 7.500" /></svg>
          </button>
        </div>
      </div>
    </div>
  </aside>
);

const TOOLBOX = [
  ["part", "dialog", "extrude", "shell", "wire", "cut", "round", "mirror"],
  ["editFeature", "moveFeature", "eraseFeature"],
  ["datumPick", "partition", "partitionCell", "scissors"],
  ["xyz", "axis", "plane", "csys"],
  ["offset", "stitch", "repair", "tools"],
  ["solidL", "recycle"],
];

const Toolbox = () => (
  <div className="flex w-[61px] shrink-0 flex-col gap-1.5 bg-linear-to-r from-white to-[#ededed] pt-1 pr-0.5 pl-0.5">
    {TOOLBOX.map((group, i) => (
      <div key={group[0]} className={`grid grid-cols-[28px_28px] border-[#a5a5a5] ${i < TOOLBOX.length - 1 ? "border-b" : ""}`}>
        {group.map((n) => (
          <button key={n} aria-label={n} className="flex h-7 items-center justify-center">
            <Icon name={n} />
          </button>
        ))}
      </div>
    ))}
  </div>
);

const Viewport = () => (
  <main className="relative min-w-0 flex-1 overflow-hidden border-t border-l border-[#6b6b6b] bg-linear-to-b from-[#1d2d47] via-[#2d4059] via-59% to-[#a1afc7]">
    <svg viewBox="0 0 380 505" className="absolute top-[169px] left-[576px] w-[380px]" stroke="#000" strokeLinejoin="round" aria-label="Part-1">
      <path d="M12 16L48 10 369 65 337 74z" fill="#dedede" />
      <path d="M337 74L369 65 345 473 315 494z" fill="#999" />
      <path d="M12 16L337 74 315 494 27 366z" fill="#fff" />
    </svg>
    <svg viewBox="0 -8 120 108" className="absolute bottom-10 left-[77px] w-[120px]" aria-label="View triad">
      <path d="M50 65V27" stroke="#1fc21f" strokeWidth="5" />
      <path d="M53 65V30" stroke="#16953a" strokeWidth="1.500" />
      <path d="M50 19l8 16H42z" fill="#1fc21f" />
      <path d="M52 22l6 13h-4z" fill="#2f8a42" />
      <path d="M51 65L33 71" stroke="#0a1f86" strokeWidth="5" />
      <path d="M18 77l8-12h6l4 6-4 10z" fill="#0a1f86" />
      <path d="M51 65l22 6" stroke={R} strokeWidth="5" />
      <path d="M87 76l-15 5v-5l4-11z" fill={R} />
      <path d="M87 76l-15 5v-4l8-2z" fill="#8a2a10" />
      <g fill="#fff" fontSize="12" textAnchor="middle" className="[font-family:'DejaVu_Sans',sans-serif]">
        <text x="50" y="8">Y</text>
        <text x="7" y="84">Z</text>
        <text x="97" y="82">X</text>
      </g>
    </svg>
    <svg viewBox="0 0 72 96" className="absolute top-1 right-11 w-[72px]" fill="none" aria-label="View compass">
      <path d="M36 28C24 34 16 48 16 65l20-8z" fill="#3c4d66" />
      <path d="M36 28c12 7 22 20 23 36l-23-7z" fill="#1f6f9a" />
      <path d="M36 73l-23 9c1 9 45 9 46-1z" fill="#3c4d66" />
      <g stroke="#b8c6e6" strokeWidth="2" strokeLinejoin="round">
        <path d="M36 22v55" />
        <path d="M36 28C24 34 16 48 16 65l20-8 23 7c-1-16-11-29-23-36z" />
        <path d="M36 73l-23 9c1 9 45 9 46-1z" />
      </g>
      <circle cx="36" cy="20" r="3" fill="#c8d4f0" />
      <rect x="32" y="77" width="8" height="8" fill={R} />
      <g fill="#f0b347" fontSize="9" textAnchor="middle" className="[font-family:'DejaVu_Sans',sans-serif]">
        <text x="36" y="13">Y</text>
        <text x="9" y="70">Z</text>
        <text x="64" y="69">X</text>
      </g>
    </svg>
  </main>
);

const StatusStrip = () => (
  <div className="mb-[5px] flex h-[33px] shrink-0 items-center justify-end gap-1.5 overflow-hidden bg-linear-to-b from-white to-[#f0f0f0] to-80% pt-1.5 text-[#0b2a86]">
    <svg viewBox="0 0 22 20" className="mb-1 h-5 w-[22px]" fill="none" stroke={N} strokeWidth="1.700" aria-hidden="true">
      <path d="M7 2c5-2 8 0 7 1-1 2-5 4-8 4M8 7c5 0 5 5-7 12L6 9M21 8c-4-1-8 0-6 3s2 6-5 6" />
    </svg>
    <span className="w-[74px] text-[15px] leading-5 font-bold whitespace-nowrap italic [font-family:'DejaVu_Sans',sans-serif]">SIMULIA</span>
  </div>
);

const MessageArea = () => (
  <footer className="flex h-[57px] shrink-0 overflow-hidden pr-[13px] pl-0.5">
    <div className="flex w-[38px] flex-col">
      <button aria-label="Message area" className="flex h-[38px] w-9 shrink-0 items-center justify-center border border-[#dcdcdc] bg-[#fafafa]">
        <svg viewBox="0 0 22 22" className="size-[22px]">
          <rect x="2.500" y="1.500" width="17" height="18" fill="#dcdcdc" stroke="#555" />
          <path d="M9 4h1M13 5h1M16 4h1M11 8h1M15 9h1M9 11h1M13 12h1" stroke="#fff6a0" strokeWidth="2" />
          <path d="M1 21l2-5 6-4 2 2-4 5z" fill={G} stroke="#111" />
        </svg>
      </button>
      <button aria-label="Command line interface" className="ml-0.5 flex h-[38px] w-[34px] shrink-0 justify-center border border-[#dcdcdc] pt-1.5">
        <svg viewBox="0 0 24 24" className="size-6" fill="none">
          <rect x="0.500" y="0.500" width="23" height="23" fill="#f7d778" stroke="#111" />
          <path d="M4 7l4 4-4 4M10 7l4 4-4 4M16 7l4 4-4 4" stroke="#111" strokeWidth="1.800" />
        </svg>
      </button>
    </div>
    <textarea aria-label="Messages" readOnly className="flex-1 resize-none border border-b-0 border-[#a8a8a8] bg-white outline-none" />
  </footer>
);

export default function App() {
  return (
    <div className="flex h-screen flex-col overflow-hidden bg-[#f0f0f0] text-xs text-black [font-family:'Noto_Sans','Noto_Sans_CJK_SC',sans-serif]">
      <TitleBar />
      <MenuBar />
      <Toolbar />
      <div className="flex min-h-0 flex-1">
        <ModelPanel />
        <div className="flex min-w-0 flex-1 flex-col pl-1">
          <div className="flex h-8 shrink-0 items-center gap-3 bg-linear-to-b from-white to-[#f0f0f0] pl-[7px]">
            <ContextCombo id="module" label="Module:" value="Part" className="w-[113px]" />
            <ContextCombo id="model" label="Model:" value="Model-1" className="w-[98px]" />
            <ContextCombo id="part" label="Part:" value="Part-1" className="w-[99px]" />
          </div>
          <div className="flex min-h-0 flex-1">
            <Toolbox />
            <Viewport />
          </div>
          <StatusStrip />
        </div>
      </div>
      <MessageArea />
    </div>
  );
}
